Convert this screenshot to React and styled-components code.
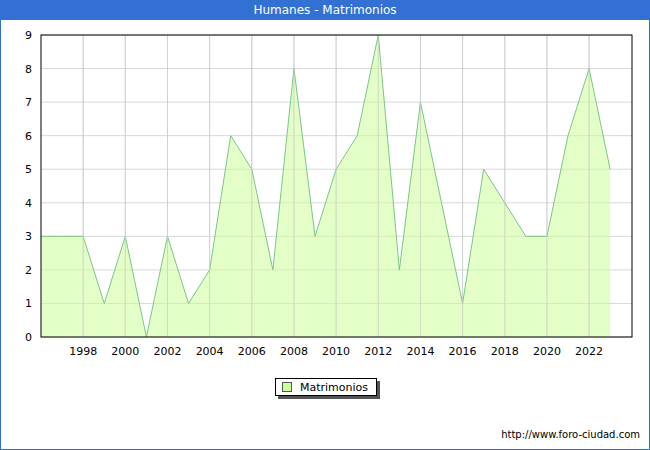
import styled, { createGlobalStyle } from 'styled-components';

const Global = createGlobalStyle`
  html, body { margin: 0; padding: 0; background: #fff; }
  body { font-family: "DejaVu Sans", Verdana, sans-serif; }
`;

const Frame = styled.div`
  width: 650px;
  height: 450px;
  box-sizing: border-box;
  border: 1px solid #3370d4;
  border-top: none;
  display: flex;
  flex-direction: column;
  background: #fff;
`;

const TitleBar = styled.div`
  height: 20px;
  background: #3370d4;
  color: #fff;
  font-size: 12px;
  display: flex;
  align-items: center;
  justify-content: center;
`;

const LegendRow = styled.div`
  display: flex;
  justify-content: center;
  margin-top: 18px;
  padding-left: 2px;
`;

const Legend = styled.div`
  display: flex;
  align-items: center;
  gap: 8px;
  height: 16px;
  padding: 0 8px 0 6px;
  border: 1px solid #000;
  box-shadow: 3px 3px 0 #555;
  font-size: 11px;
  color: #000;
`;

const Swatch = styled.span`
  width: 8px;
  height: 8px;
  border: 1px solid #555;
  background: #ccff99;
`;

const Footer = styled.div`
  margin-top: auto;
  margin-bottom: 9px;
  padding-right: 9px;
  text-align: right;
  font-size: 10px;
  color: #000;
`;

const data = [3,3,3,1,3,0,3,1,2,6,5,2,8,3,5,6,9,2,7,4,1,5,4,3,3,6,8,5];
const X0 = 40, X1 = 631, Y0 = 15, Y1 = 317;
const xOf = (i) => X0 + i * 21.08;
const yOf = (v) => Y1 - v * (Y1 - Y0) / 9;

function Chart() {
  const pts = data.map((v, i) => `${xOf(i)},${yOf(v)}`).join(' ');
  const area = `${X0},${Y1} ${pts} ${xOf(data.length - 1)},${Y1}`;
  const years = [];
  for (let y = 1998; y <= 2022; y += 2) years.push(y);
  return (
    <svg width="648" height="340" style={{ display: 'block' }}>
      {[...Array(10)].map((_, v) => (
        <g key={v}>
          <line x1={X0} x2={X1} y1={yOf(v)} y2={yOf(v)} stroke="#d8d8d8" />
          <text x="31" y={yOf(v) + 4} fontSize="11" textAnchor="end" fill="#000">{v}</text>
        </g>
      ))}
      {years.map((y) => {
        const x = xOf(y - 1996);
        return (
          <g key={y}>
            <line x1={x} x2={x} y1={Y0} y2={Y1} stroke="#d0d0d0" />
            <text x={x} y="335" fontSize="11" textAnchor="middle" fill="#000">{y}</text>
          </g>
        );
      })}
      <polygon points={area} fill="#ccff99" fillOpacity="0.55" />
      <polyline points={pts} fill="none" stroke="#7cc48a" strokeWidth="1" />
      {years.map((y) => {
        const x = xOf(y - 1996);
        return <line key={y} x1={x} x2={x} y1={Y0} y2={Y1} stroke="#d0d0d0" strokeOpacity="0.6" />;
      })}
      <rect x={X0} y={Y0} width={X1 - X0} height={Y1 - Y0} fill="none" stroke="#000" />
    </svg>
  );
}

export default function App() {
  return (
    <Frame>
      <Global />
      <TitleBar>Humanes - Matrimonios</TitleBar>
      <Chart />
      <LegendRow>
        <Legend>
          <Swatch />
          Matrimonios
        </Legend>
      </LegendRow>
      <Footer>http://www.foro-ciudad.com</Footer>
    </Frame>
  );
}
